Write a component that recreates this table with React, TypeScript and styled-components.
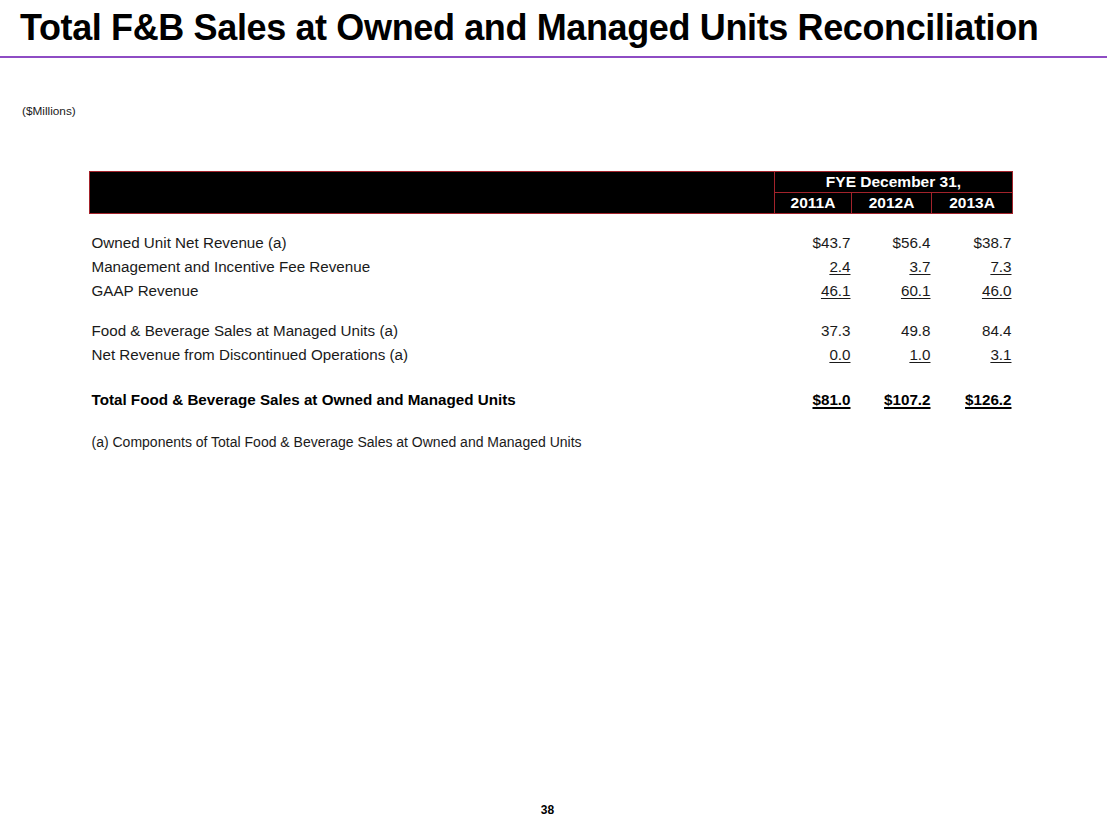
import styled, { createGlobalStyle } from "styled-components";

const GlobalStyle = createGlobalStyle`
	body {
		margin: 0;
		background: #ffffff;
		font-family: "Liberation Sans", Arial, sans-serif;
		color: #000000;
	}
`;

const Page = styled.div`
	width: 1107px;
	height: 830px;
	position: relative;
	overflow: hidden;
	background: #ffffff;
`;

const Title = styled.h1`
	margin: 0;
	padding: 7px 0 0 20px;
	height: 50px;
	box-sizing: border-box;
	font-size: 36px;
	line-height: 42px;
	font-weight: bold;
	letter-spacing: -0.37px;
	color: #000000;
	white-space: nowrap;
`;

const Rule = styled.div`
	height: 2px;
	margin-top: 6px;
	background: #8e4cc4;
`;

const Units = styled.div`
	margin: 46px 0 0 22px;
	font-size: 11.8px;
	line-height: 14px;
	color: #1a1a1a;
`;

const Table = styled.table`
	margin: 53px 0 0 89px;
	width: 923px;
	border-collapse: collapse;
	table-layout: fixed;
	font-size: 15.2px;
`;

const HeadCell = styled.th`
	background: #000000;
	color: #ffffff;
	border: 1px solid #a3232b;
	font-weight: bold;
	font-size: 15.5px;
	height: 20px;
	padding: 0;
	text-align: center;
	line-height: 20px;
`;

const Row = styled.tr<{ $h?: number }>`
	height: ${(p) => p.$h ?? 24}px;
`;

const Label = styled.td<{ $bold?: boolean }>`
	padding: 0 0 0 2px;
	font-weight: ${(p) => (p.$bold ? "bold" : "normal")};
	color: ${(p) => (p.$bold ? "#000000" : "#1a1a1a")};
	white-space: nowrap;
`;

const Num = styled.td<{ $bold?: boolean; $line?: boolean }>`
	text-align: right;
	padding: 0 1px 0 0;
	font-weight: ${(p) => (p.$bold ? "bold" : "normal")};
	text-decoration: ${(p) => (p.$line ? "underline" : "none")};
	text-underline-offset: 2px;
	text-decoration-thickness: ${(p) => (p.$bold ? 2 : 1)}px;
	color: ${(p) => (p.$bold ? "#000000" : "#1a1a1a")};
`;

const Note = styled.td`
	padding: 0 0 0 2px;
	font-size: 14px;
	color: #1a1a1a;
`;

const PageNo = styled.div`
	position: absolute;
	left: 0;
	right: 12px;
	top: 803px;
	text-align: center;
	font-size: 12px;
	font-weight: bold;
`;

type Line = {
	label: string;
	values: string[];
	line?: boolean;
	bold?: boolean;
};

const group1: Line[] = [
	{ label: "Owned Unit Net Revenue (a)", values: ["$43.7", "$56.4", "$38.7"] },
	{ label: "Management and Incentive Fee Revenue", values: ["2.4", "3.7", "7.3"], line: true },
	{ label: "GAAP Revenue", values: ["46.1", "60.1", "46.0"], line: true },
];

const group2: Line[] = [
	{ label: "Food & Beverage Sales at Managed Units (a)", values: ["37.3", "49.8", "84.4"] },
	{ label: "Net Revenue from Discontinued Operations (a)", values: ["0.0", "1.0", "3.1"], line: true },
];

const total: Line = {
	label: "Total Food & Beverage Sales at Owned and Managed Units",
	values: ["$81.0", "$107.2", "$126.2"],
	line: true,
	bold: true,
};

function DataRow({ row }: { row: Line }) {
	return (
		<Row>
			<Label $bold={row.bold}>{row.label}</Label>
			{row.values.map((v, i) => (
				<Num key={i} $bold={row.bold} $line={row.line}>
					{v}
				</Num>
			))}
		</Row>
	);
}

export default function App() {
	return (
		<Page>
			<GlobalStyle />
			<Title>Total F&amp;B Sales at Owned and Managed Units Reconciliation</Title>
			<Rule />
			<Units>($Millions)</Units>
			<Table>
				<colgroup>
					<col style={{ width: 685 }} />
					<col style={{ width: 77 }} />
					<col style={{ width: 80 }} />
					<col style={{ width: 81 }} />
				</colgroup>
				<thead>
					<tr>
						<HeadCell rowSpan={2} />
						<HeadCell colSpan={3}>FYE December 31,</HeadCell>
					</tr>
					<tr>
						<HeadCell>2011A</HeadCell>
						<HeadCell>2012A</HeadCell>
						<HeadCell>2013A</HeadCell>
					</tr>
				</thead>
				<tbody>
					<Row $h={17}>
						<td colSpan={4} />
					</Row>
					{group1.map((r) => (
						<DataRow key={r.label} row={r} />
					))}
					<Row $h={16}>
						<td colSpan={4} />
					</Row>
					{group2.map((r) => (
						<DataRow key={r.label} row={r} />
					))}
					<Row $h={21}>
						<td colSpan={4} />
					</Row>
					<DataRow row={total} />
					<Row $h={18}>
						<td colSpan={4} />
					</Row>
					<Row>
						<Note colSpan={4}>(a) Components of Total Food &amp; Beverage Sales at Owned and Managed Units</Note>
					</Row>
				</tbody>
			</Table>
			<PageNo>38</PageNo>
		</Page>
	);
}
